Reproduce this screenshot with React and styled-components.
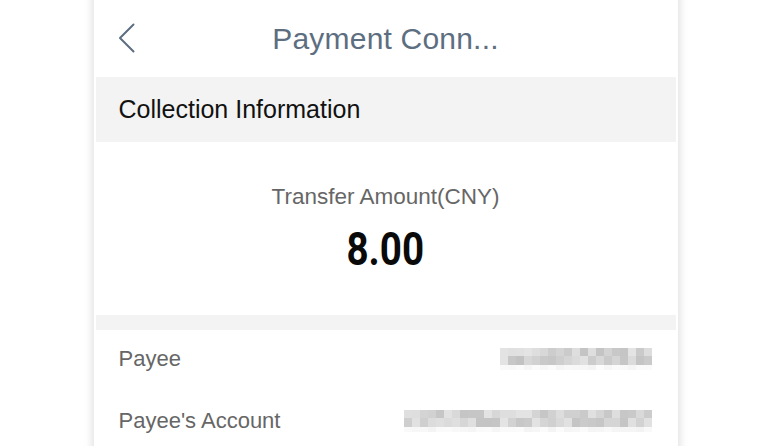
import React from "react";
import styled, { createGlobalStyle } from "styled-components";

const GlobalStyle = createGlobalStyle`
  html, body {
    margin: 0;
    padding: 0;
    background: #ffffff;
    font-family: "Liberation Sans", Arial, sans-serif;
  }
`;

const Page = styled.div`
  height: 446px;
  overflow: hidden;
  display: flex;
  justify-content: center;
  align-items: flex-start;
`;

const Phone = styled.div`
  width: 580px;
  flex-shrink: 0;
  padding: 0 2px 40px;
  margin-top: -20px;
  background: #ffffff;
  box-shadow: 0 0 8px 2px rgba(0, 0, 0, 0.12);
`;

const NavBar = styled.div`
  height: 97px;
  padding-top: 20px;
  box-sizing: border-box;
  display: flex;
  align-items: center;
  justify-content: center;
  position: relative;
`;

const BackButton = styled.button`
  position: absolute;
  left: 22px;
  top: 43px;
  border: 0;
  padding: 0;
  background: none;
  display: flex;
`;

const Title = styled.h1`
  margin: 0;
  font-size: 30px;
  font-weight: 400;
  color: #5c6e80;
  letter-spacing: 0.2px;
`;

const SectionHeader = styled.div`
  height: 65px;
  background: #f3f3f3;
  display: flex;
  align-items: center;
  padding-left: 23px;
  font-size: 25px;
  color: #111111;
`;

const AmountBlock = styled.div`
  height: 173px;
  display: flex;
  flex-direction: column;
  align-items: center;
  padding-top: 42px;
  box-sizing: border-box;
`;

const AmountLabel = styled.div`
  font-size: 22.5px;
  color: #666666;
  line-height: 26px;
`;

const AmountValue = styled.div`
  margin-top: 19px;
  font-family: Roboto, "Liberation Sans", sans-serif;
  font-weight: 700;
  font-size: 47px;
  line-height: 40px;
  color: #0a0a0a;
  transform: scaleX(0.82);
`;

const Divider = styled.div`
  height: 15px;
  background: #f3f3f3;
`;

const Row = styled.div`
  height: 62px;
  box-sizing: border-box;
  padding: 0 24px 4px 23px;
  display: flex;
  align-items: center;
  justify-content: space-between;
`;

const RowLabel = styled.span`
  font-size: 22px;
  color: #666666;
`;

const Mosaic = styled.div`
  display: grid;
  grid-template-columns: repeat(${(p) => p.$cols}, 8px);
  grid-template-rows: 8px 9px 5px;
`;

const Cell = styled.div`
  background: ${(p) => p.$shade};
`;

function Blurred({ cols, seed }) {
  const cells = [];
  for (let r = 0; r < 3; r++) {
    for (let c = 0; c < cols; c++) {
      const n = Math.abs(Math.sin((c + 1) * 12.9898 + (r + 1) * 78.233 + seed) * 43758.5453) % 1;
      let v;
      if (r === 2) v = 243 + Math.round(n * 9);
      else v = 194 + Math.round(n * 34);
      cells.push(<Cell key={r + "-" + c} $shade={`rgb(${v},${v},${v})`} />);
    }
  }
  return <Mosaic $cols={cols}>{cells}</Mosaic>;
}

export default function App() {
  return (
    <Page>
      <GlobalStyle />
      <Phone>
        <NavBar>
          <BackButton aria-label="back">
            <svg width="18" height="30" viewBox="0 0 18 30">
              <polyline
                points="15.5,1.5 2,15 15.5,28.5"
                fill="none"
                stroke="#5c6e80"
                strokeWidth="2"
                strokeLinecap="round"
                strokeLinejoin="round"
              />
            </svg>
          </BackButton>
          <Title>Payment Conn...</Title>
        </NavBar>
        <SectionHeader>Collection Information</SectionHeader>
        <AmountBlock>
          <AmountLabel>Transfer Amount(CNY)</AmountLabel>
          <AmountValue>8.00</AmountValue>
        </AmountBlock>
        <Divider />
        <Row>
          <RowLabel>Payee</RowLabel>
          <Blurred cols={19} seed={3} />
        </Row>
        <Row>
          <RowLabel>Payee's Account</RowLabel>
          <Blurred cols={31} seed={7} />
        </Row>
      </Phone>
    </Page>
  );
}
